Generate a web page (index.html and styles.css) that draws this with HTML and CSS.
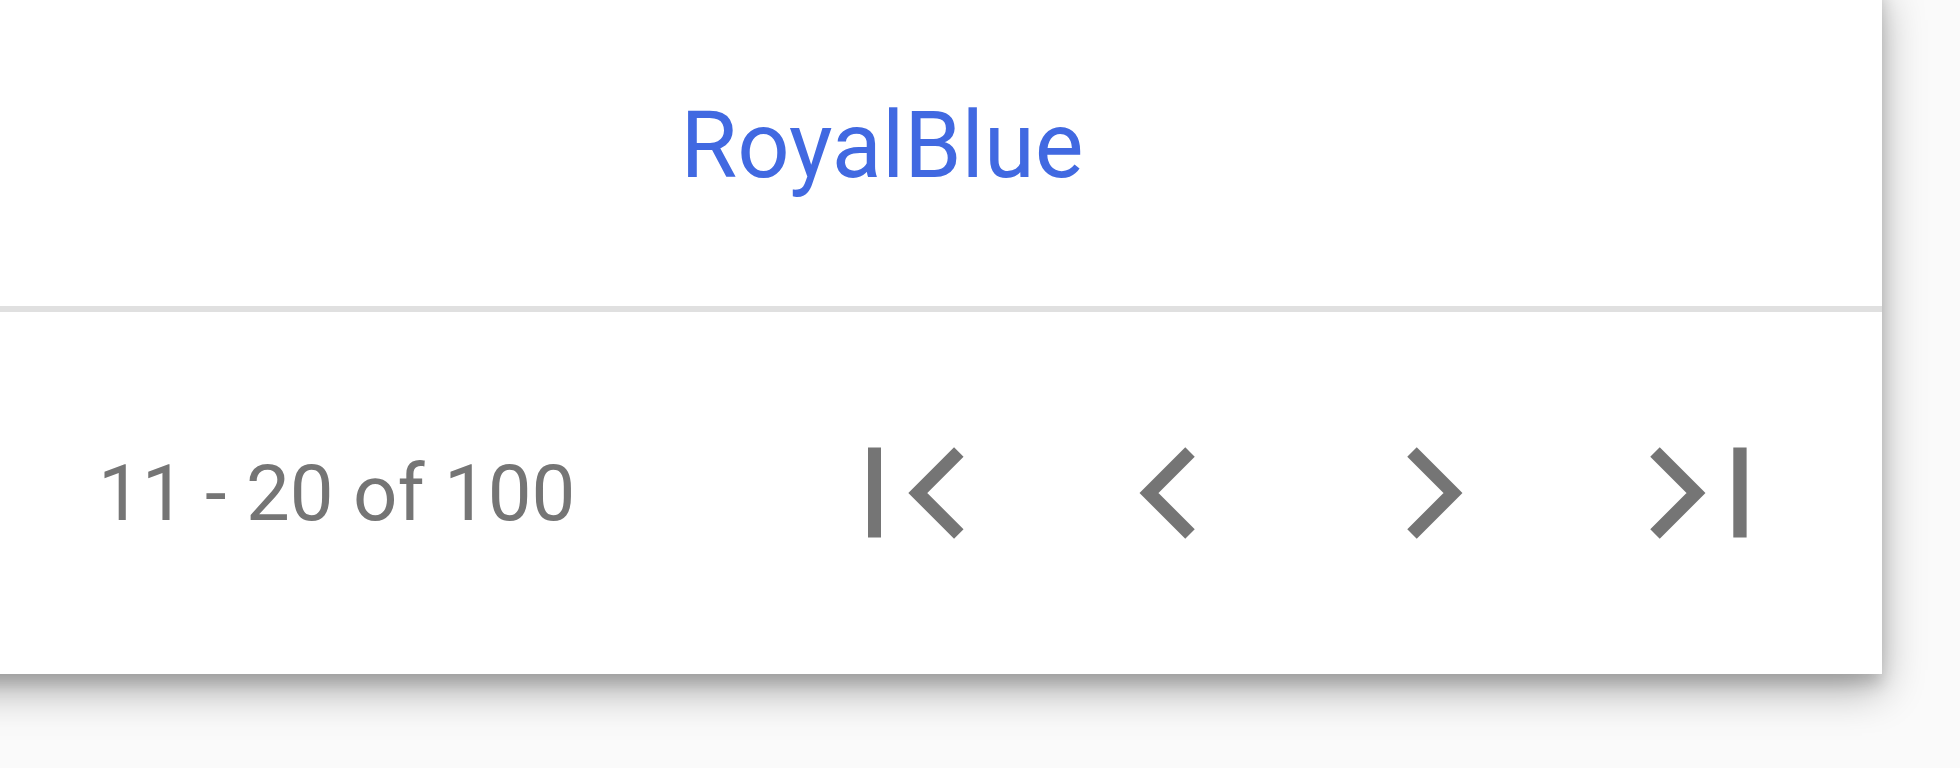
FILE: index.html
```html
<!DOCTYPE html>
<html>
<head>
  <title>Color pager</title>
  <link rel="stylesheet" href="styles.css">
</head>
<body>

  <!-- Card -->
  <div class="card">
    <div class="color-name">RoyalBlue</div>

    <!-- Pager -->
    <div class="pager">
      <div class="range">11 - 20 of 100</div>

      <button class="page-btn first-btn" title="First page">
        <svg width="100" height="96" viewBox="0 0 100 96">
          <rect x="2" y="2.5" width="13" height="90"/>
          <polyline points="92.8,7 51.8,48 92.8,89"/>
        </svg>
      </button>
      <button class="page-btn prev-btn" title="Previous page">
        <svg width="100" height="96" viewBox="0 0 100 96">
          <polyline points="71,7 30,48 71,89"/>
        </svg>
      </button>
      <button class="page-btn next-btn" title="Next page">
        <svg width="100" height="96" viewBox="0 0 100 96">
          <polyline points="29,7 70,48 29,89"/>
        </svg>
      </button>
      <button class="page-btn last-btn" title="Last page">
        <svg width="104" height="96" viewBox="0 0 104 96">
          <polyline points="9,7 50,48 9,89"/>
          <rect x="87.3" y="2.5" width="13.3" height="90"/>
        </svg>
      </button>
    </div>
  </div>

</body>
</html>
```

FILE: styles.css
```css
body {
  font-family: 'Roboto', 'Liberation Sans', sans-serif;
  background-color: #fafafa;
  margin: 0;
  padding: 0;
  height: 100vh;
  overflow: hidden;
}

/* Card */
.card {
  width: 2000px;
  margin: -16px 0 0 -118px;
  background-color: #ffffff;
  box-shadow: 0 16px 40px rgba(0,0,0,0.32), 0 10px 14px rgba(0,0,0,0.14);
}

.color-name {
  height: 322px;
  display: flex;
  align-items: center;
  justify-content: center;
  font-size: 92px;
  color: royalblue;
  border-bottom: 6px solid #e0e0e0;
}

/* Pager */
.pager {
  height: 362px;
  display: flex;
  align-items: center;
  padding: 0 132px 0 216px;
  color: #757575;
}

.range {
  font-size: 78px;
}

.page-btn {
  background: none;
  border: none;
  padding: 0;
  display: flex;
  cursor: pointer;
}

.page-btn svg {
  fill: #757575;
}

.page-btn polyline {
  fill: none;
  stroke: #757575;
  stroke-width: 13.4;
}

.first-btn {
  margin-left: auto;
}

.prev-btn {
  margin-left: 153px;
}

.next-btn {
  margin-left: 164px;
}

.last-btn {
  margin-left: 163px;
}
```
